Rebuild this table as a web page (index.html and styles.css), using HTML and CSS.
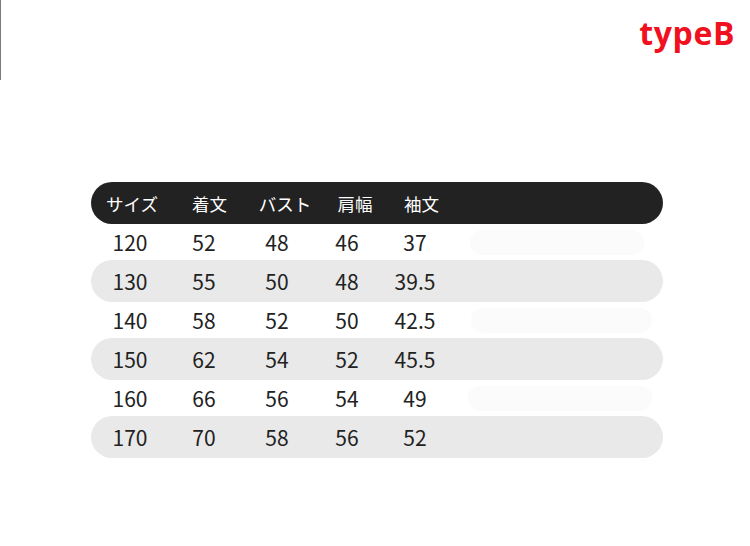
FILE: index.html
```html
<!DOCTYPE html>
<html lang="ja">
<head>
<meta charset="utf-8">
<title>typeB</title>
<link rel="stylesheet" href="styles.css">
</head>
<body>
<div class="top">
  <div class="edge"></div>
  <div class="label">typeB</div>
</div>
<div class="table">
  <div class="head">
    <span>サイズ</span><span>着文</span><span>バスト</span><span>肩幅</span><span>袖文</span>
  </div>
  <div class="row light"><span>120</span><span>52</span><span>48</span><span>46</span><span>37</span><i class="ghost g1"></i></div>
  <div class="row grey"><span>130</span><span>55</span><span>50</span><span>48</span><span>39.5</span></div>
  <div class="row light"><span>140</span><span>58</span><span>52</span><span>50</span><span>42.5</span><i class="ghost g2"></i></div>
  <div class="row grey"><span>150</span><span>62</span><span>54</span><span>52</span><span>45.5</span></div>
  <div class="row light"><span>160</span><span>66</span><span>56</span><span>54</span><span>49</span><i class="ghost g3"></i></div>
  <div class="row grey"><span>170</span><span>70</span><span>58</span><span>56</span><span>52</span></div>
</div>
</body>
</html>
```
FILE: styles.css
```css
html, body {
  margin: 0;
  padding: 0;
  background: #ffffff;
}
body {
  width: 750px;
  height: 546px;
  overflow: hidden;
  font-family: "Noto Sans CJK JP", "Noto Sans", sans-serif;
}
.top {
  height: 182px;
  display: flex;
  justify-content: space-between;
  align-items: flex-start;
}
.edge {
  width: 1px;
  height: 80px;
  background: #7a7a7a;
}
.label {
  font-family: "Open Sans", "Noto Sans", sans-serif;
  font-weight: 700;
  font-size: 32px;
  line-height: 1;
  color: #f0101e;
  margin-top: 17px;
  margin-right: 15px;
  letter-spacing: 0.6px;
}
.table {
  margin-left: 91px;
  width: 572px;
  display: flex;
  flex-direction: column;
}
.head {
  height: 42px;
  border-radius: 21px;
  background: #222222;
  color: #ffffff;
  font-size: 17.5px;
  display: grid;
  grid-template-columns: 82px 73px 78px 62px 71px;
  align-items: center;
}
.head span {
  text-align: center;
}
.row {
  display: grid;
  grid-template-columns: 78px 70px 76px 64px 72px 1fr;
  align-items: center;
  font-size: 21px;
  color: #222222;
}
.row span {
  text-align: center;
}
.row.light {
  height: 36px;
  background: #ffffff;
}
.row.grey {
  height: 42px;
  border-radius: 21px;
  background: #e9e9e9;
}
.ghost {
  height: 25px;
  border-radius: 12px;
  background: #fbfbfb;
  margin-left: 19px;
  margin-right: 19px;
}
.g2 { margin-left: 20px; margin-right: 11px; }
.g3 { margin-left: 17px; margin-right: 11px; }
```
